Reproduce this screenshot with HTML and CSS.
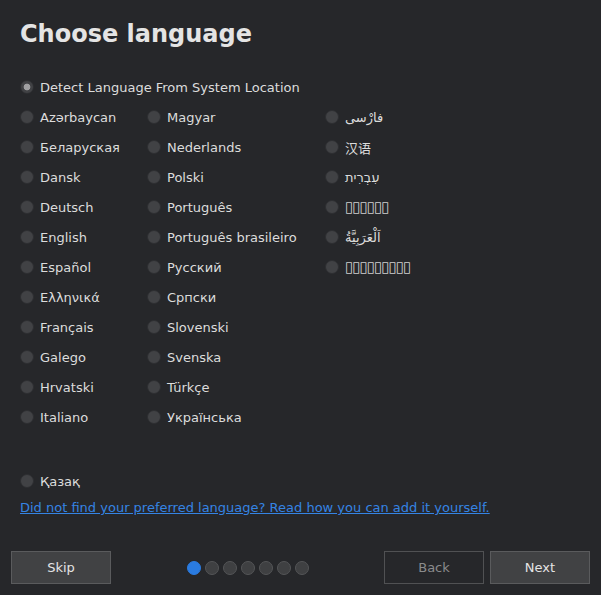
FILE: index.html
```html
<!DOCTYPE html>
<html>
<head>
<meta charset="utf-8">
<link rel="stylesheet" href="styles.css">
</head>
<body>
<div class="page">
  <h1 class="title">Choose language</h1>
  <div class="detect opt"><span class="radio checked"></span><span>Detect Language From System Location</span></div>
  <div class="grid">
    <div class="col c1">
      <div class="opt"><span class="radio"></span><span>Azərbaycan</span></div>
      <div class="opt"><span class="radio"></span><span>Беларуская</span></div>
      <div class="opt"><span class="radio"></span><span>Dansk</span></div>
      <div class="opt"><span class="radio"></span><span>Deutsch</span></div>
      <div class="opt"><span class="radio"></span><span>English</span></div>
      <div class="opt"><span class="radio"></span><span>Español</span></div>
      <div class="opt"><span class="radio"></span><span>Ελληνικά</span></div>
      <div class="opt"><span class="radio"></span><span>Français</span></div>
      <div class="opt"><span class="radio"></span><span>Galego</span></div>
      <div class="opt"><span class="radio"></span><span>Hrvatski</span></div>
      <div class="opt"><span class="radio"></span><span>Italiano</span></div>
    </div>
    <div class="col c2">
      <div class="opt"><span class="radio"></span><span>Magyar</span></div>
      <div class="opt"><span class="radio"></span><span>Nederlands</span></div>
      <div class="opt"><span class="radio"></span><span>Polski</span></div>
      <div class="opt"><span class="radio"></span><span>Português</span></div>
      <div class="opt"><span class="radio"></span><span>Português brasileiro</span></div>
      <div class="opt"><span class="radio"></span><span>Русский</span></div>
      <div class="opt"><span class="radio"></span><span>Српски</span></div>
      <div class="opt"><span class="radio"></span><span>Slovenski</span></div>
      <div class="opt"><span class="radio"></span><span>Svenska</span></div>
      <div class="opt"><span class="radio"></span><span>Türkçe</span></div>
      <div class="opt"><span class="radio"></span><span>Українська</span></div>
    </div>
    <div class="col c3">
      <div class="opt"><span class="radio"></span><span dir="rtl">فارْسی</span></div>
      <div class="opt"><span class="radio"></span><span class="cjk">汉语</span></div>
      <div class="opt"><span class="radio"></span><span dir="rtl">עִבְרִית</span></div>
      <div class="opt"><span class="radio"></span><span class="tofu">▯▯▯▯▯▯</span></div>
      <div class="opt"><span class="radio"></span><span dir="rtl">اَلْعَرَبِيَّةُ</span></div>
      <div class="opt"><span class="radio"></span><span class="tofu">▯▯▯▯▯▯▯▯▯</span></div>
    </div>
  </div>
  <div class="opt kazak"><span class="radio"></span><span>Қазақ</span></div>
  <a class="link" href="#">Did not find your preferred language? Read how you can add it yourself.</a>
  <div class="footer">
    <button class="btn skip">Skip</button>
    <div class="dots">
      <span class="dot active"></span><span class="dot"></span><span class="dot"></span><span class="dot"></span><span class="dot"></span><span class="dot"></span><span class="dot"></span>
    </div>
    <div class="nav">
      <button class="btn back">Back</button>
      <button class="btn next">Next</button>
    </div>
  </div>
</div>
</body>
</html>
```

FILE: styles.css
```css
html, body {
  margin: 0;
  padding: 0;
  background: #26272a;
}
body {
  width: 601px;
  height: 595px;
  overflow: hidden;
  font-family: "DejaVu Sans", sans-serif;
  font-size: 13px;
  color: #dcdcdc;
}
.page {
  display: flex;
  flex-direction: column;
  height: 595px;
  box-sizing: border-box;
  padding: 0 11px 11px 11px;
}
.title {
  margin: 17px 0 0 9px;
  font-size: 24px;
  font-weight: bold;
  line-height: 34px;
  color: #e4e4e4;
}
.opt {
  display: flex;
  align-items: center;
  height: 30px;
  gap: 6px;
  white-space: nowrap;
}
.detect {
  margin: 21px 0 0 9px;
}
.radio {
  width: 12px;
  height: 12px;
  border-radius: 50%;
  background: #414245;
  border: 1px solid #2d2e31;
  flex: none;
}
.radio.checked {
  background: radial-gradient(circle, #a0a0a2 0 3px, #414245 3.7px);
}
.grid {
  display: grid;
  grid-template-columns: 127px 178px auto;
  margin-left: 9px;
}
.cjk {
  font-family: "DejaVu Sans", "Noto Sans CJK SC", sans-serif;
}
.tofu {
  font-size: 15px;
  letter-spacing: -1px;
  color: #cfcfcf;
}
.kazak {
  margin: 34px 0 0 9px;
}
.link {
  margin: 4px 0 0 9px;
  color: #3584e4;
  text-decoration: underline;
  line-height: 16px;
}
.footer {
  margin-top: auto;
  display: flex;
  align-items: center;
  justify-content: space-between;
}
.btn {
  width: 100px;
  height: 33px;
  box-sizing: border-box;
  font-family: "DejaVu Sans", sans-serif;
  font-size: 13px;
  color: #e4e4e4;
  background: #414244;
  border: 1px solid #5a5b5d;
  border-radius: 0;
  padding: 0;
}
.back {
  background: #26272a;
  color: #8a8b8c;
  border-color: #505153;
}
.nav {
  display: flex;
  gap: 6px;
}
.dots {
  display: flex;
  gap: 4px;
  margin-left: 1px;
}
.dot {
  width: 12px;
  height: 12px;
  border-radius: 50%;
  background: #3f4042;
  border: 1px solid #545557;
}
.dot.active {
  background: #2a7be0;
  border-color: #2a7be0;
}
```
